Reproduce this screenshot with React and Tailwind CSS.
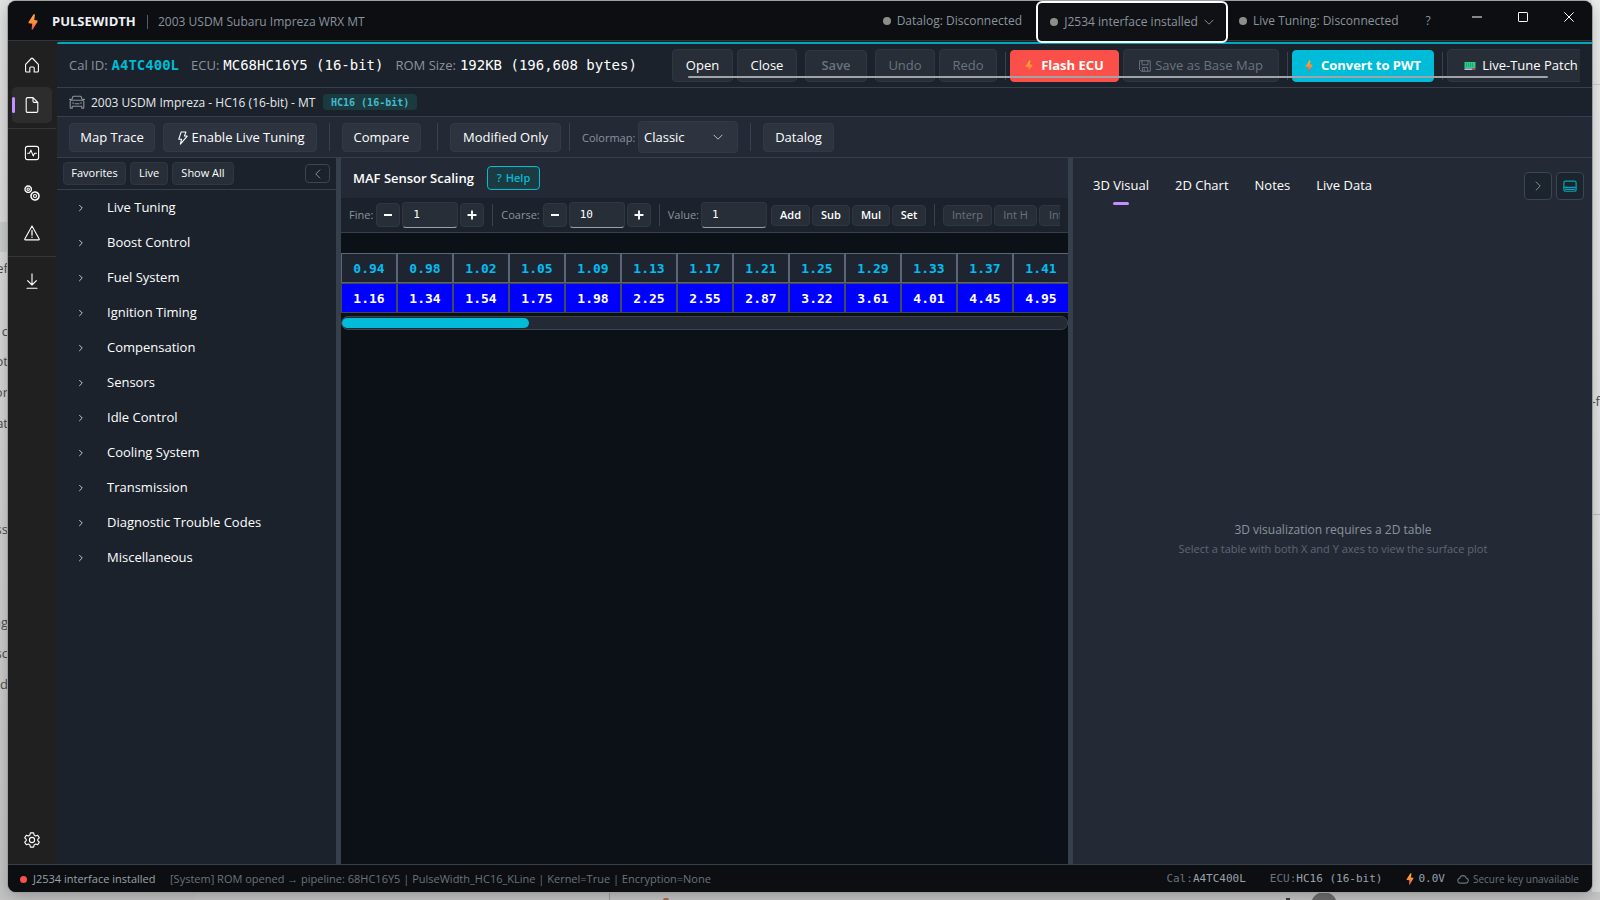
import React from "react";

const MONO = "font-['DejaVu_Sans_Mono',monospace]";

/* ---------- icons ---------- */

function Icon({ size = "size-4", children, sw = 1.1, className = "" }) {
  return (
    <svg
      viewBox="0 0 16 16"
      className={`${size} shrink-0 ${className}`}
      fill="none"
      stroke="currentColor"
      strokeWidth={sw}
      strokeLinecap="round"
      strokeLinejoin="round"
      aria-hidden="true"
    >
      {children}
    </svg>
  );
}

function Bolt({ className = "h-4 w-2.5", id }) {
  return (
    <svg viewBox="0 0 10 16" className={`${className} shrink-0`} aria-hidden="true">
      <defs>
        <linearGradient id={id} x1="0" y1="0" x2="0" y2="1">
          <stop offset="0" stopColor="#fdb72b" />
          <stop offset="0.55" stopColor="#fb8a3c" />
          <stop offset="1" stopColor="#e8456b" />
        </linearGradient>
      </defs>
      <path d="M5.6 0.2 7 0.5 6.2 6 9.4 6.4 9.6 7.4 4.6 15.8 3.6 15.4 4.2 9.8 0.6 9.2 0.4 8.2Z" fill={`url(#${id})`} />
    </svg>
  );
}

const HomeIcon = () => (
  <Icon>
    <path d="M1.6 7.4 7.3 1.5a1 1 0 0 1 1.4 0l5.7 5.9V14a1 1 0 0 1-1 1H10.2v-4a1 1 0 0 0-1-1H6.8a1 1 0 0 0-1 1v4H2.6a1 1 0 0 1-1-1Z" />
  </Icon>
);
const DocIcon = () => (
  <Icon>
    <path d="M9 .6H3.6A1.4 1.4 0 0 0 2.2 2v12a1.4 1.4 0 0 0 1.4 1.4h8.8a1.4 1.4 0 0 0 1.4-1.4V5.4ZM9 .6v3.6a1.2 1.2 0 0 0 1.2 1.2h3.6" />
  </Icon>
);
const PulseIcon = () => (
  <Icon>
    <rect x="1.4" y="1.4" width="13.2" height="13.2" rx="2.2" />
    <path d="M3.6 8.3h1.9l1.4-3.2 2.3 5.8 1.4-2.6h1.9" />
  </Icon>
);
const GearsIcon = () => (
  <Icon>
    <circle cx="4.2" cy="4.2" r="3.2" strokeDasharray="1.7 .8" strokeWidth="1.4" />
    <circle cx="4.2" cy="4.2" r="1.2" />
    <circle cx="11" cy="11" r="4" strokeDasharray="2.3 .8" strokeWidth="1.6" />
    <circle cx="11" cy="11" r="1.5" />
  </Icon>
);
const WarnIcon = () => (
  <Icon>
    <path d="M8 .9 15.2 14.1a.6.6 0 0 1-.5.8H1.3a.6.6 0 0 1-.5-.8Z" />
    <path d="M8 5.6v4.6M8 12.2v.2" strokeWidth="1.3" />
  </Icon>
);
const DownloadIcon = () => (
  <Icon>
    <path d="M8 .8v11M3.6 7.6 8 12l4.4-4.4M3 15.2h10" />
  </Icon>
);
const GearIcon = () => (
  <Icon>
    <path d="M6.4.9h3.2l.5 2.2 1.5.8 2.1-.7 1.6 2.7-1.6 1.5v1.2l1.6 1.5-1.6 2.7-2.1-.7-1.5.8-.5 2.2H6.4l-.5-2.2-1.5-.8-2.1.7L.7 10.1l1.6-1.5V7.4L.7 5.9l1.6-2.7 2.1.7 1.5-.8Z" />
    <circle cx="8" cy="8" r="2.6" />
  </Icon>
);
const CarIcon = () => (
  <Icon className="text-[#8b949e]">
    <path d="M2.6 6.2 3.7 3a1.2 1.2 0 0 1 1.1-.8h6.4a1.2 1.2 0 0 1 1.1.8l1.1 3.2M1.2 10.800V7.600a1.400 1.400 0 0 1 1.400-1.400h10.800a1.400 1.400 0 0 1 1.400 1.400v3.200M1.200 10.800v2.800a.6.6 0 0 0 .6.6h1.400v-2h9.600v2h1.400a.6.6 0 0 0 .6-.6v-2.800M3.600 9h1.200M11.200 9h1.200M6.200 9.800h3.600M.6 5.400h1M14.400 5.400h1" />
  </Icon>
);
const LiveBolt = () => (
  <Icon sw={1.2} size="size-3.5">
    <path d="M5.8 1.2h5.6L9.6 5.8h3.2L5 15l1.4-5.6H3.2Z" />
  </Icon>
);
const SaveIcon = () => (
  <Icon size="size-3" sw={1.3}>
    <path d="M1 1h14v14H3l-2-2ZM4 1v5.4h8V1M4.5 15v-5h7v5M7 12v3" />
  </Icon>
);
const ChevronRight = ({ size = "size-2" }) => (
  <Icon size={size} sw={2}>
    <path d="M5 2.5 10.5 8 5 13.5" />
  </Icon>
);
const ChevronDown = ({ size = "size-2.5" }) => (
  <Icon size={size} sw={1.5}>
    <path d="M1.5 5 8 11.5 14.5 5" />
  </Icon>
);
const Board = () => (
  <svg viewBox="0 0 12 10" className="h-2.5 w-3 shrink-0" aria-hidden="true">
    <rect x="0.5" y="1" width="11" height="6.5" fill="#2fc98a" />
    <path d="M2 3h8M2 5h8" stroke="#12805a" strokeWidth="1" strokeDasharray="1 1" />
    <rect x="0.5" y="7.5" width="8" height="1.5" fill="#c9b5e8" />
    <rect x="8.5" y="7.5" width="3" height="1.5" fill="#e0305a" />
  </svg>
);

/* ---------- shared parts ---------- */

const tones = {
  plain: "border-[#2f3742] bg-[#272e38]",
  raised: "border-[#323a46] bg-[#2d3440]",
  danger: "border-[#fa5049] bg-[#fa5049] font-bold",
  primary: "border-[#00bcd8] bg-[#00bcd8] font-bold",
};
const textSizes = {
  sm: "text-[11px]",
  md: "text-[13px]",
};

function ToolButton({ className = "", tone = "plain", text = "md", children, ...rest }) {
  return (
    <button
      type="button"
      className={`flex shrink-0 items-center justify-center whitespace-nowrap rounded-[4px] border ${tones[tone]} ${textSizes[text]} ${className}`}
      {...rest}
    >
      {children}
    </button>
  );
}

const Divider = ({ className, color = "bg-[#38434f]" }) => <span className={`w-px shrink-0 ${color} ${className}`} />;

function NavItem({ label, active, children }) {
  return (
    <button
      type="button"
      aria-label={label}
      className={`relative flex h-9 w-10 items-center justify-center rounded-[5px] text-white ${active ? "bg-[#2d2d2d]" : ""}`}
    >
      {active && <span className="absolute left-0 h-4 w-[3px] rounded-full bg-[#c58fff]" />}
      {children}
    </button>
  );
}

function Stepper({ id, label, value }) {
  return (
    <div className="flex shrink-0 items-center gap-0.5">
      <label htmlFor={id} className="mr-px text-[11px] text-[#8b949e]">
        {label}
      </label>
      <ToolButton className="h-6 w-6" aria-label={`Decrease ${id}`}>
        <span className="h-0.5 w-2 bg-white" />
      </ToolButton>
      <NumberBox id={id} value={value} width="w-14" />
      <ToolButton className="h-6 w-6" aria-label={`Increase ${id}`}>
        <Icon size="size-2.5" sw={3}>
          <path d="M8 2v12M2 8h12" />
        </Icon>
      </ToolButton>
    </div>
  );
}

function NumberBox({ id, value, width }) {
  return (
    <input
      id={id}
      type="text"
      defaultValue={value}
      className={`h-[26px] shrink-0 rounded-[4px] border border-b-[#9aa0a8] border-[#2f3742] bg-[#272e38] px-2.5 pb-0.5 text-[11px] text-white ${MONO} ${width}`}
    />
  );
}

/* ---------- data ---------- */

const tree = [
  "Live Tuning",
  "Boost Control",
  "Fuel System",
  "Ignition Timing",
  "Compensation",
  "Sensors",
  "Idle Control",
  "Cooling System",
  "Transmission",
  "Diagnostic Trouble Codes",
  "Miscellaneous",
];
const axis = ["0.94", "0.98", "1.02", "1.05", "1.09", "1.13", "1.17", "1.21", "1.25", "1.29", "1.33", "1.37", "1.41"];
const cells = ["1.16", "1.34", "1.54", "1.75", "1.98", "2.25", "2.55", "2.87", "3.22", "3.61", "4.01", "4.45", "4.95"];

/* ---------- sections ---------- */

function TitleBar() {
  return (
    <header className="flex h-10 shrink-0 items-center border-b border-[#30363d] bg-[#0c0e12] text-[12px] text-[#8b949e]">
      <div className="flex items-center pl-5 pt-0.5">
        <Bolt id="bolt-title" />
        <span className="ml-3.5 w-[81px] text-[13px] font-bold text-[#eef1f4]">PULSEWIDTH</span>
        <Divider className="ml-3.5 h-3.5" color="bg-[#545c66]" />
        <span className="ml-2.5 whitespace-nowrap">2003 USDM Subaru Impreza WRX MT</span>
      </div>
      <div className="ml-auto flex shrink-0 items-center">
        <span className="mr-3.5 flex items-center gap-1.5 whitespace-nowrap pt-px">
          <span className="size-2 rounded-full bg-[#8a9089]" />
          Datalog: Disconnected
        </span>
        <button
          type="button"
          className="relative z-10 -mb-0.5 flex h-[42px] w-48 items-center justify-center gap-1.5 whitespace-nowrap rounded-[6px] border-2 border-white bg-[#101115]"
        >
          <span className="size-2 rounded-full bg-[#8a9089]" />
          J2534 interface installed
          <ChevronDown />
        </button>
        <span className="ml-[11px] flex w-[183px] items-center gap-1.5 whitespace-nowrap pt-px">
          <span className="size-2 rounded-full bg-[#8a9089]" />
          Live Tuning: Disconnected
        </span>
        <button type="button" aria-label="Help" className="w-3 pt-px text-[12px]">
          ?
        </button>
      </div>
      <div className="mb-2 flex shrink-0 pl-5 text-white">
        <button type="button" aria-label="Minimize" className="flex h-8 w-[46px] items-center justify-center">
          <Icon size="size-2.5" sw={1.6}>
            <path d="M0 8h16" />
          </Icon>
        </button>
        <button type="button" aria-label="Maximize" className="flex h-8 w-[46px] items-center justify-center">
          <Icon size="size-2.5" sw={1.6}>
            <rect x="0.8" y="0.8" width="14.4" height="14.4" rx="1" />
          </Icon>
        </button>
        <button type="button" aria-label="Close" className="flex h-8 w-[46px] items-center justify-center">
          <Icon size="size-2.5" sw={1.6}>
            <path d="M1 1 15 15M15 1 1 15" />
          </Icon>
        </button>
      </div>
    </header>
  );
}

function RomField({ label, value, color }) {
  return (
    <div className="flex items-center gap-1">
      <dt>{label}</dt>
      <dd className={`text-[14px] ${color} ${MONO}`}>{value}</dd>
    </div>
  );
}

function RomBar() {
  return (
    <div className="flex h-11 shrink-0 items-center border-b border-[#34404c] pl-3">
      <dl className="flex w-[603px] shrink-0 items-center gap-3 whitespace-nowrap text-[13px] text-[#8b949e]">
        <RomField label="Cal ID:" value="A4TC400L" color="font-bold text-[#00bcd4]" />
        <RomField label="ECU:" value="MC68HC16Y5 (16-bit)" color="text-white" />
        <RomField label="ROM Size:" value="192KB (196,608 bytes)" color="text-white" />
      </dl>
      <div className="relative mr-3 min-w-0 flex-1 overflow-hidden">
        <div className="flex items-end gap-1">
          <ToolButton className="h-[33px] w-[61px]">Open</ToolButton>
          <ToolButton className="mr-1 h-[33px] w-[60px]">Close</ToolButton>
          <ToolButton className="mr-1 h-8 w-[62px] font-semibold text-[#6b737d]" disabled>
            Save
          </ToolButton>
          <ToolButton className="h-[33px] w-[60px] text-[#6b737d]" disabled>
            Undo
          </ToolButton>
          <ToolButton className="h-[33px] w-[58px] text-[#6b737d]" disabled>
            Redo
          </ToolButton>
          <Divider className="mb-0.5 ml-1 h-7" />
          <ToolButton tone="danger" className="h-8 w-[109px] gap-2">
            <Bolt id="bolt-flash" className="h-3 w-2" />
            Flash ECU
          </ToolButton>
          <ToolButton className="h-[33px] w-[156px] gap-1 text-[#6b737d]" disabled>
            <SaveIcon />
            Save as Base Map
          </ToolButton>
          <Divider className="mb-0.5 ml-1 h-7" />
          <ToolButton tone="primary" className="h-8 w-[142px] gap-2">
            <Bolt id="bolt-convert" className="h-3 w-2" />
            Convert to PWT
          </ToolButton>
          <Divider className="mb-0.5 ml-1 h-7" />
          <ToolButton className="h-[33px] w-[148px] gap-1.5">
            <Board />
            Live-Tune Patch
          </ToolButton>
        </div>
        <div className="absolute bottom-1 left-4 right-8 h-0.5 rounded-full bg-[#a0a3a7]" />
      </div>
    </div>
  );
}

function VehicleRow() {
  return (
    <div className="flex h-[29px] shrink-0 items-center border-b border-[#34404c] pl-3 text-[12px]">
      <CarIcon />
      <span className="ml-1.5 w-[226px] whitespace-nowrap pt-px text-[#e6e9ec]">2003 USDM Impreza - HC16 (16-bit) - MT</span>
      <span className={`ml-1.5 flex h-4 items-center rounded-[4px] bg-[#1a3a40] px-2 text-[10px] font-bold text-[#45bccb] ${MONO}`}>
        HC16 (16-bit)
      </span>
    </div>
  );
}

function MapToolbar() {
  return (
    <div className="flex h-[41px] shrink-0 items-center border-b border-[#34404c] bg-[#232a35] pl-3">
      <ToolButton tone="raised" className="h-[29px] w-[86px] pt-0.5">Map Trace</ToolButton>
      <ToolButton tone="raised" className="ml-2 h-[29px] w-[154px] gap-0.5 pt-0.5">
        <LiveBolt />
        Enable Live Tuning
      </ToolButton>
      <Divider className="mx-3 h-7" />
      <ToolButton tone="raised" className="h-[29px] w-[79px] pt-0.5">Compare</ToolButton>
      <Divider className="ml-4 mr-3 h-7" />
      <ToolButton tone="raised" className="h-[29px] w-[111px] pt-0.5">Modified Only</ToolButton>
      <Divider className="ml-2 mr-3 h-7" />
      <label htmlFor="colormap" className="w-14 whitespace-nowrap pt-0.5 text-[11px] text-[#8b949e]">
        Colormap:
      </label>
      <div className="relative flex items-center">
        <select
          id="colormap"
          className="h-8 w-[100px] appearance-none rounded-[4px] border border-[#323a46] bg-[#2d3440] pl-[5px] pt-0.5 text-[13px] text-white"
        >
          <option>Classic</option>
        </select>
        <span className="pointer-events-none absolute right-[15px] text-[#c3c7cc]">
          <ChevronDown />
        </span>
      </div>
      <Divider className="mx-3 h-7" />
      <ToolButton tone="raised" className="h-[29px] w-[71px] pt-0.5">Datalog</ToolButton>
    </div>
  );
}

function TreePanel() {
  return (
    <aside className="flex w-[279px] shrink-0 flex-col">
      <div className="flex h-8 items-center gap-1 border-b border-[#34404c] pl-1.5 pr-1.5">
        <ToolButton text="sm" className="h-[23px] w-[63px]">Favorites</ToolButton>
        <ToolButton text="sm" className="h-[23px] w-[38px]">Live</ToolButton>
        <ToolButton text="sm" className="h-[23px] w-[62px]">Show All</ToolButton>
        <button
          type="button"
          aria-label="Collapse panel"
          className="ml-auto flex h-[19px] w-[25px] items-center justify-center rounded-[4px] border border-[#3a4653] text-[#8b949e]"
        >
          <Icon size="size-2.5" sw={1.5}>
            <path d="M11 1.5 4.5 8l6.5 6.5" />
          </Icon>
        </button>
      </div>
      <ul>
        {tree.map((t) => (
          <li key={t}>
            <button type="button" className="flex h-[35px] w-full items-center gap-[22px] pl-5 text-left text-[13px]">
              <span className="text-[#c3c7cc]">
                <ChevronRight />
              </span>
              {t}
            </button>
          </li>
        ))}
      </ul>
    </aside>
  );
}

function TablePanel() {
  return (
    <main className="flex min-w-0 flex-1 flex-col overflow-hidden bg-[#0c1017]">
      <div className="flex h-10 shrink-0 items-center bg-[#232a35] pl-3">
        <h1 className="mr-2 w-[126px] whitespace-nowrap pt-0.5 text-[13px] font-semibold">MAF Sensor Scaling</h1>
        <button
          type="button"
          className="flex h-6 w-[53px] items-center justify-center gap-1 rounded-[4px] border border-[#00bcd4] bg-[#1c3a41] pt-px text-[11px] font-semibold text-[#00bcd4]"
        >
          <span>?</span> Help
        </button>
      </div>
      <div className="flex h-[35px] shrink-0 border-b border-[#34404c] bg-[#1b222b] pl-2 pr-2">
        <div className="flex min-w-0 flex-1 items-center overflow-hidden">
          <Stepper id="fine" label="Fine:" value="1" />
          <Divider className="mx-2 h-[22px]" />
          <Stepper id="coarse" label="Coarse:" value="10" />
          <Divider className="mx-2 h-[22px]" />
          <label htmlFor="value" className="mr-0.5 text-[11px] text-[#8b949e]">
            Value:
          </label>
          <NumberBox id="value" value="1" width="w-[66px]" />
          <div className="ml-1 flex gap-0.5">
            <ToolButton text="sm" className="h-[21px] w-[39px] font-semibold">Add</ToolButton>
            <ToolButton text="sm" className="h-[21px] w-[38px] font-semibold">Sub</ToolButton>
            <ToolButton text="sm" className="h-[21px] w-[38px] font-semibold">Mul</ToolButton>
            <ToolButton text="sm" className="h-[21px] w-[34px] font-semibold">Set</ToolButton>
          </div>
          <Divider className="mx-2 h-[22px]" />
          <div className="flex gap-0.5 text-[#6b737d]">
            <ToolButton text="sm" className="h-[21px] w-[49px]" disabled>
              Interp
            </ToolButton>
            <ToolButton text="sm" className="h-[21px] w-[43px]" disabled>
              Int H
            </ToolButton>
            <ToolButton text="sm" className="h-[21px] w-[43px]" disabled>
              Int V
            </ToolButton>
          </div>
        </div>
      </div>
      <div className="overflow-hidden pt-5">
        <table className={`w-[728px] table-fixed border-separate border-spacing-0 text-center text-[13px] font-bold ${MONO}`}>
          <thead>
            <tr className="h-[30px] bg-[#1e2530] text-[#00bdf2]">
              {axis.map((v) => (
                <th key={v} scope="col" className="border border-[#5a6577] pt-0.5 font-bold">
                  {v}
                </th>
              ))}
            </tr>
          </thead>
          <tbody>
            <tr className="h-[30px] bg-[#0000fe] text-white">
              {cells.map((v) => (
                <td key={v} className="border border-[#444a50] pt-0.5">
                  {v}
                </td>
              ))}
            </tr>
          </tbody>
        </table>
      </div>
      <div className="mt-[3px] flex h-3.5 shrink-0 items-center rounded-full border border-[#3a4450] bg-[#232a35]">
        <div className="h-2.5 w-[187px] rounded-full bg-[#00bcd8]" />
      </div>
    </main>
  );
}

function VisualPanel() {
  return (
    <section className="flex w-[519px] shrink-0 flex-col bg-[#232a35]">
      <div className="flex h-14 shrink-0 items-center gap-1 pl-5 pr-2">
        <nav className="flex gap-[26px] text-[13px]">
          <button type="button" className="relative flex h-[38px] items-center justify-center">
            3D Visual
            <span className="absolute bottom-0 h-[3px] w-4 rounded-full bg-[#c58fff]" />
          </button>
          <button type="button">2D Chart</button>
          <button type="button">Notes</button>
          <button type="button">Live Data</button>
        </nav>
        <button
          type="button"
          aria-label="Expand panel"
          className="ml-auto flex size-7 items-center justify-center rounded-[4px] border border-[#3a4653] bg-[#1c242d] text-[#8b949e]"
        >
          <Icon size="size-2.5" sw={1.5}>
            <path d="M5 1.5 11.5 8 5 14.5" />
          </Icon>
        </button>
        <button
          type="button"
          aria-label="Dock to bottom"
          className="flex size-7 items-center justify-center rounded-[4px] border border-[#3a4653] bg-[#1c242d] text-[#00a5bb]"
        >
          <Icon size="size-3.5" sw={1.4}>
            <rect x="1" y="2.5" width="14" height="11.5" rx="1.8" />
            <path d="M1.5 9.500h13M2.500 11.800h11" />
          </Icon>
        </button>
      </div>
      <div className="flex flex-1 flex-col items-center justify-center gap-0.5 pl-px">
        <p className="text-[12px] text-[#8b949e]">3D visualization requires a 2D table</p>
        <p className="text-[11px] text-[#5f6873]">Select a table with both X and Y axes to view the surface plot</p>
      </div>
    </section>
  );
}

function StatusBar() {
  return (
    <footer className="flex h-7 shrink-0 items-center border-t border-[#34404c] bg-[#0c0e12] pl-3 pr-[13px] pt-px text-[11px] text-[#6b737d]">
      <span className="flex w-[150px] items-center gap-1.5 whitespace-nowrap text-[#9aa2ab]">
        <span className="size-[7px] rounded-full bg-[#fa5049]" />
        J2534 interface installed
      </span>
      <span className="whitespace-nowrap">
        [System] ROM opened → pipeline: 68HC16Y5 | PulseWidth_HC16_KLine | Kernel=True | Encryption=None
      </span>
      <span className={`ml-auto whitespace-nowrap ${MONO}`}>
        Cal:<span className="text-[#9aa2ab]">A4TC400L</span>
      </span>
      <span className={`ml-6 whitespace-nowrap ${MONO}`}>
        ECU:<span className="text-[#9aa2ab]">HC16 (16-bit)</span>
      </span>
      <span className={`ml-6 flex items-center gap-1 text-[#9aa2ab] ${MONO}`}>
        <Bolt id="bolt-status" className="h-3 w-2" />
        0.0V
      </span>
      <span className="ml-3 flex items-center gap-1 whitespace-nowrap text-[10px]">
        <Icon size="size-3" sw={1.5}>
          <path d="M4 13.5a3.4 3.4 0 0 1-.3-6.7 4.5 4.5 0 0 1 8.700 0A3.400 3.400 0 0 1 12 13.500Z" />
        </Icon>
        Secure key unavailable
      </span>
    </footer>
  );
}

/* Text of the page behind the window that shows past its left edge. */
const behind = [
  ["ef", "top-[258px]"],
  ["g c", "top-[321px]"],
  ["ot", "top-[351px]"],
  ["or", "top-[382px]"],
  ["at", "top-[413px]"],
  ["ss", "top-[519px]"],
  ["ng", "top-[612px]"],
  ["sc", "top-[643px]"],
  ["d", "top-[674px]"],
];

function Backdrop() {
  return (
    <div className="absolute inset-0 overflow-hidden bg-linear-to-b from-[#e2e2e2] to-[#c4c4c4] text-[13px] text-[#4a4a4a]" aria-hidden="true">
      <div className="absolute left-0 top-[222px] h-[30px] w-2 bg-[#c9cccb]" />
      {behind.map(([t, top]) => (
        <span key={top} className={`absolute left-0 flex w-2 justify-end whitespace-nowrap leading-5 ${top}`}>
          {t}
        </span>
      ))}
      <div className="absolute right-0 top-0 h-full w-2 bg-linear-to-b from-[#ececec] to-[#dadada]" />
      <div className="absolute right-0 top-[84px] h-px w-2 bg-[#cfcfcf]" />
      <div className="absolute right-0 top-[514px] h-px w-2 bg-[#bdbdbd]" />
      <span className="absolute right-0 top-[391px] leading-5">-f</span>
      <div className="absolute bottom-0 left-[195px] right-0 h-2 bg-[#c6c6c6]" />
      <div className="absolute bottom-0 left-[609px] h-2 w-px bg-[#9e9e9e]" />
      <div className="absolute bottom-0 left-[663px] h-0.5 w-1.5 rounded-t-full bg-[#b5694a]" />
      <div className="absolute -bottom-[18px] left-[1311px] size-[26px] rounded-full bg-[#6e6e6e]" />
      <div className="absolute bottom-0 left-[1286px] h-0.5 w-1 bg-[#3a3a3a]" />
    </div>
  );
}

export default function App() {
  return (
    <div className="relative flex h-screen overflow-hidden px-2 pb-2 pt-px font-['Open_Sans','Noto_Sans',sans-serif] text-white">
      <Backdrop />
      <div className="relative flex min-w-0 flex-1 flex-col overflow-hidden rounded-lg bg-[#202020] shadow-[0_0_0_1px_#9b9f9d,0_4px_16px_#00000040]">
        <TitleBar />
        <div className="flex min-h-0 flex-1">
          <nav className="flex w-[49px] shrink-0 flex-col items-start pb-1.5 pt-1.5">
            <div className="flex flex-col gap-1 pl-1">
              <NavItem label="Home">
                <HomeIcon />
              </NavItem>
              <NavItem label="ROM" active>
                <DocIcon />
              </NavItem>
            </div>
            <hr className="mb-1.5 mt-[5px] w-12 border-[#363636]" />
            <div className="flex flex-col gap-1 pl-1">
              <NavItem label="Datalog">
                <PulseIcon />
              </NavItem>
              <NavItem label="Tools">
                <GearsIcon />
              </NavItem>
              <NavItem label="Trouble codes">
                <WarnIcon />
              </NavItem>
            </div>
            <hr className="mb-1.5 mt-[5px] w-12 border-[#363636]" />
            <div className="pl-1">
              <NavItem label="Download">
                <DownloadIcon />
              </NavItem>
            </div>
            <div className="mt-auto pl-1">
              <NavItem label="Settings">
                <GearIcon />
              </NavItem>
            </div>
          </nav>
          <div className="mt-px flex min-w-0 flex-1 flex-col rounded-tl-[3px] bg-[#1b222b]">
            <div className="h-0.5 shrink-0 rounded-tl-full bg-[#00a8be]" />
            <RomBar />
            <VehicleRow />
            <MapToolbar />
            <div className="flex min-h-0 flex-1">
              <TreePanel />
              <div className="w-[5px] shrink-0 bg-[#36404c]" />
              <TablePanel />
              <div className="w-[5px] shrink-0 bg-[#36404c]" />
              <VisualPanel />
            </div>
          </div>
        </div>
        <StatusBar />
      </div>
    </div>
  );
}
